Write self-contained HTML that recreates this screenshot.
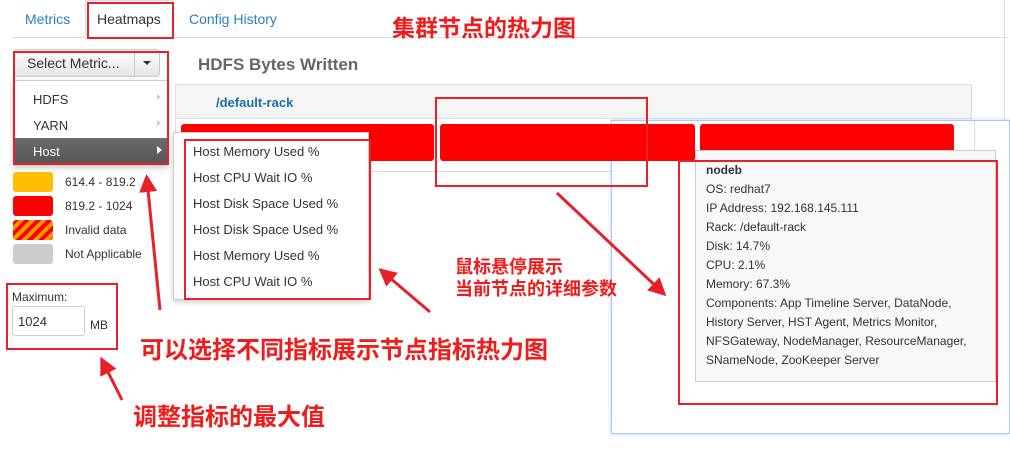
<!DOCTYPE html>
<html><head><meta charset="utf-8"><style>
*{margin:0;padding:0;box-sizing:border-box}
body{width:1010px;height:463px;background:#fff;position:relative;overflow:hidden;font-family:"Liberation Sans",Arial,sans-serif;font-size:13px;color:#333}
.a{position:absolute}
.tab{position:absolute;top:11px;font-size:14px;color:#2a7fc1}
.cn{position:absolute;color:#f01c1c;font-weight:bold;font-family:"Liberation Sans","Noto Sans CJK SC",sans-serif;white-space:nowrap}
.rb{position:absolute;border:2px solid #e8202a}
.sw{position:absolute;left:13px;width:40px;height:20px;border-radius:3px}
.lt{position:absolute;left:65px;font-size:12px;color:#333}
.mi{position:absolute;left:193px;font-size:13px;color:#333}
.tt div{height:19px;line-height:19px}
</style></head><body>
<div class="a" style="left:12px;top:37px;width:996px;height:1px;background:#ddd"></div>
<div class="a" style="left:85px;top:0;width:88px;height:38px;border:1px solid #ddd;border-bottom:none;background:#fff"></div>
<div class="tab" style="left:25px">Metrics</div>
<div class="tab" style="left:97px;color:#333">Heatmaps</div>
<div class="tab" style="left:189px">Config History</div>
<div class="a" style="left:1004px;top:0;width:1px;height:120px;background:#ddd"></div>

<div class="a" style="left:13px;top:49px;width:147px;height:28px;border:1px solid #ccc;border-radius:4px;background:linear-gradient(#fff,#e6e6e6)"></div>
<div class="a" style="left:134px;top:49px;width:1px;height:28px;background:#ccc"></div>
<div class="a" style="left:27px;top:55px;font-size:14px;color:#333">Select Metric...</div>
<div class="a" style="left:143px;top:61px;border:4px solid transparent;border-top:4px solid #333"></div>
<div class="a" style="left:198px;top:55px;font-size:17px;font-weight:bold;color:#666">HDFS Bytes Written</div>

<div class="a" style="left:175px;top:84px;width:797px;height:88px;border:1px solid #ddd"></div>
<div class="a" style="left:176px;top:85px;width:795px;height:34px;background:#f5f5f5;border-bottom:1px solid #ddd"></div>
<div class="a" style="left:216px;top:95px;font-size:13px;font-weight:bold;color:#1b6ea8">/default-rack</div>

<div class="a" style="left:611px;top:120px;width:399px;height:314px;background:#fff;border:1px solid #a8c8f0;box-shadow:0 0 4px #bcd4f5"></div>
<div class="a" style="left:974px;top:121px;width:1px;height:30px;background:#ddd"></div>

<div class="a" style="left:181px;top:124px;width:253px;height:37px;background:#f00;border-radius:3px"></div>
<div class="a" style="left:440px;top:124px;width:255px;height:37px;background:#f00;border-radius:3px"></div>
<div class="a" style="left:700px;top:124px;width:254px;height:37px;background:#f00;border-radius:3px"></div>

<div class="a" style="left:13px;top:80px;width:155px;height:86px;background:#fff;border:1px solid #ccc;box-shadow:0 2px 5px rgba(0,0,0,.2)"></div>
<div class="a" style="left:33px;top:92px;font-size:13px">HDFS</div><div class="a" style="left:157px;top:94px;border:3px solid transparent;border-left:4px solid #ccc"></div>
<div class="a" style="left:33px;top:118px;font-size:13px">YARN</div><div class="a" style="left:157px;top:120px;border:3px solid transparent;border-left:4px solid #ccc"></div>
<div class="a" style="left:14px;top:138px;width:153px;height:26px;background:linear-gradient(#6a6a6a,#555)"></div>
<div class="a" style="left:33px;top:144px;font-size:13px;color:#fff">Host</div><div class="a" style="left:157px;top:146px;border:4px solid transparent;border-left:5px solid #fff"></div>

<div class="a" style="left:173px;top:132px;width:196px;height:168px;background:#fff;border:1px solid #ccc;box-shadow:0 2px 5px rgba(0,0,0,.2)"></div>
<div class="mi" style="top:144px">Host Memory Used %</div>
<div class="mi" style="top:170px">Host CPU Wait IO %</div>
<div class="mi" style="top:196px">Host Disk Space Used %</div>
<div class="mi" style="top:222px">Host Disk Space Used %</div>
<div class="mi" style="top:248px">Host Memory Used %</div>
<div class="mi" style="top:274px">Host CPU Wait IO %</div>

<div class="sw" style="top:172px;background:#fdbe03"></div><div class="lt" style="top:175px">614.4 - 819.2</div>
<div class="sw" style="top:196px;background:#f00"></div><div class="lt" style="top:199px">819.2 - 1024</div>
<div class="sw" style="top:220px;background:repeating-linear-gradient(135deg,#f00 0 4px,#f90 4px 8px)"></div><div class="lt" style="top:223px">Invalid data</div>
<div class="sw" style="top:244px;background:#ccc"></div><div class="lt" style="top:247px">Not Applicable</div>

<div class="a" style="left:12px;top:290px;font-size:12px">Maximum:</div>
<div class="a" style="left:12px;top:306px;width:73px;height:30px;border:1px solid #ccc;border-radius:3px;padding:7px 5px;font-size:13px">1024</div>
<div class="a" style="left:90px;top:318px;font-size:12px">MB</div>

<div class="a tt" style="left:695px;top:150px;width:301px;height:232px;background:#f8f8f8;border:1px solid #ccc;padding:10px 10px;font-size:12px;color:#333">
<div style="font-weight:bold">nodeb</div><div>OS: redhat7</div><div>IP Address: 192.168.145.111</div><div>Rack: /default-rack</div><div>Disk: 14.7%</div><div>CPU: 2.1%</div><div>Memory: 67.3%</div><div>Components: App Timeline Server, DataNode,</div><div>History Server, HST Agent, Metrics Monitor,</div><div>NFSGateway, NodeManager, ResourceManager,</div><div>SNameNode, ZooKeeper Server</div></div>

<div class="rb" style="left:87px;top:2px;width:87px;height:37px"></div>
<div class="rb" style="left:13px;top:51px;width:156px;height:114px"></div>
<div class="rb" style="left:184px;top:139px;width:187px;height:161px"></div>
<div class="rb" style="left:435px;top:97px;width:213px;height:90px"></div>
<div class="rb" style="left:678px;top:160px;width:320px;height:245px"></div>
<div class="rb" style="left:6px;top:283px;width:112px;height:67px"></div>

<div class="cn" style="left:392px;top:9px;font-size:23px">集群节点的热力图</div>
<div class="cn" style="left:455px;top:256px;font-size:18px;line-height:22px">鼠标悬停展示<br>当前节点的详细参数</div>
<div class="cn" style="left:140px;top:330px;font-size:24px">可以选择不同指标展示节点指标热力图</div>
<div class="cn" style="left:133px;top:397px;font-size:24px">调整指标的最大值</div>

<svg class="a" style="left:0;top:0" width="1010" height="463">
<defs><marker id="m" markerWidth="6" markerHeight="6" refX="4" refY="3" orient="auto"><path d="M0,0 L6,3 L0,6 z" fill="#e8202a"/></marker></defs>
<g stroke="#e8202a" stroke-width="3" fill="none" marker-end="url(#m)">
<line x1="160" y1="310" x2="147" y2="180"/>
<line x1="430" y1="312" x2="383" y2="272"/>
<line x1="122" y1="400" x2="103" y2="362"/>
<line x1="557" y1="193" x2="662" y2="292"/>
</g></svg>
</body></html>
